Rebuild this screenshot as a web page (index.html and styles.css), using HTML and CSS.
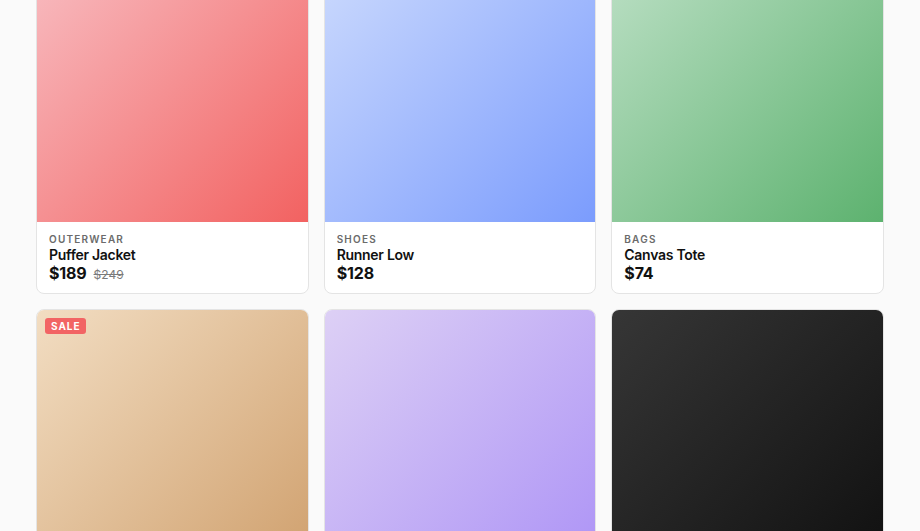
FILE: index.html
```html
<!DOCTYPE html>
<html lang="en">
  <head>
    <meta charset="UTF-8" />
    <meta name="viewport" content="width=device-width, initial-scale=1.0" />
    <title>shop grid</title>
    <link rel="stylesheet" href="styles.css">
  </head>
  <body>
    <div id="products">
      <div class="card">
        <div class="thumb pink"></div>
        <div class="info">
          <p class="cat">Outerwear</p>
          <h3>Puffer Jacket</h3>
          <p class="price">$189 <s>$249</s></p>
        </div>
      </div>
      <div class="card">
        <div class="thumb blue"></div>
        <div class="info">
          <p class="cat">Shoes</p>
          <h3>Runner Low</h3>
          <p class="price">$128</p>
        </div>
      </div>
      <div class="card">
        <div class="thumb green"></div>
        <div class="info">
          <p class="cat">Bags</p>
          <h3>Canvas Tote</h3>
          <p class="price">$74</p>
        </div>
      </div>
      <div class="card">
        <div class="thumb tan">
          <span class="badge">Sale</span>
        </div>
        <div class="info">
          <p class="cat">Knitwear</p>
          <h3>Wool Sweater</h3>
          <p class="price">$96</p>
        </div>
      </div>
      <div class="card">
        <div class="thumb lilac"></div>
        <div class="info">
          <p class="cat">Accessories</p>
          <h3>Silk Scarf</h3>
          <p class="price">$42</p>
        </div>
      </div>
      <div class="card">
        <div class="thumb dark"></div>
        <div class="info">
          <p class="cat">Outerwear</p>
          <h3>Rain Shell</h3>
          <p class="price">$210</p>
        </div>
      </div>
    </div>
  </body>
</html>
```

FILE: styles.css
```css
body {
  margin: 0;
  background: #fafafa;
  font-family: Inter, "Noto Sans", sans-serif;
  color: #111;
}
#products {
  display: grid;
  grid-template-columns: repeat(3, 1fr);
  gap: 15px;
  padding: 0 36px 40px;
  margin-top: -50px;
}
.card {
  background: #fff;
  border: 1px solid #e4e4e4;
  border-radius: 8px;
  overflow: hidden;
}
.thumb {
  position: relative;
  aspect-ratio: 1;
}
.pink {
  background: linear-gradient(135deg, #f8bec3, #f26261);
}
.blue {
  background: linear-gradient(135deg, #cddbfd, #7b9cfd);
}
.green {
  background: linear-gradient(135deg, #bde0c6, #5db26f);
}
.tan {
  background: linear-gradient(135deg, #f2ddc2, #cf9f6c);
}
.lilac {
  background: linear-gradient(135deg, #ddd0f5, #ac92f6);
}
.dark {
  background: linear-gradient(135deg, #363636, #0f0f0f);
}
.badge {
  position: absolute;
  top: 8px;
  left: 8px;
  background: #f26464;
  color: #fff;
  font-size: 10px;
  font-weight: 700;
  letter-spacing: 0.1em;
  text-transform: uppercase;
  line-height: 16px;
  padding: 0 5px 0 6px;
  border-radius: 3px;
}
.info {
  padding: 10px 12px;
  height: 51px;
}
.info p,
.info h3 {
  margin: 0;
}
.cat {
  font-size: 10px;
  line-height: 14px;
  font-weight: 600;
  letter-spacing: 0.12em;
  text-transform: uppercase;
  color: #6b6b6b;
}
.info h3 {
  font-size: 14px;
  line-height: 17px;
  font-weight: 600;
  letter-spacing: -0.02em;
}
.price {
  font-size: 16px;
  line-height: 20px;
  font-weight: 700;
  letter-spacing: -0.01em;
  display: flex;
  align-items: baseline;
  gap: 7px;
}
.price s {
  font-size: 12px;
  font-weight: 400;
  letter-spacing: 0;
  color: #7a7a7a;
}
```
